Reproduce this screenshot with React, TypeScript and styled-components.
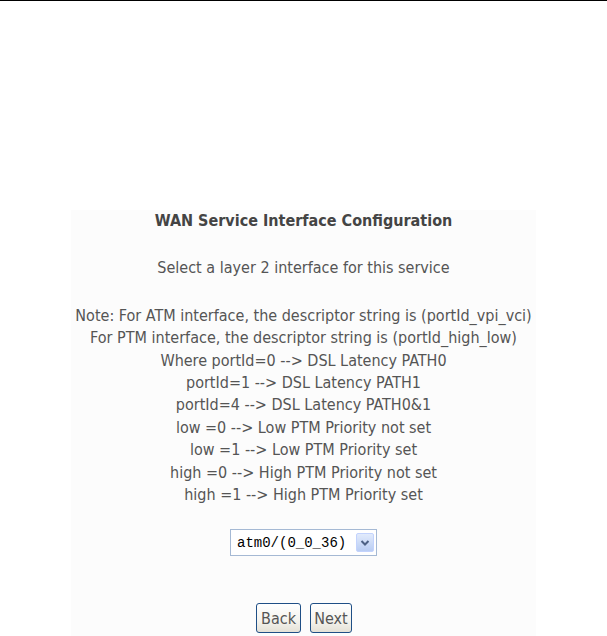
import * as React from 'react';
import styled, { createGlobalStyle } from 'styled-components';

const GlobalStyle = createGlobalStyle`
  html, body {
    margin: 0;
    padding: 0;
    background: #ffffff;
  }
  body {
    font-family: "DejaVu Sans", sans-serif;
  }
`;

const notes = [
  'Note: For ATM interface, the descriptor string is (portId_vpi_vci)',
  'For PTM interface, the descriptor string is (portId_high_low)',
  'Where portId=0 --> DSL Latency PATH0',
  'portId=1 --> DSL Latency PATH1',
  'portId=4 --> DSL Latency PATH0&1',
  'low =0 --> Low PTM Priority not set',
  'low =1 --> Low PTM Priority set',
  'high =0 --> High PTM Priority not set',
  'high =1 --> High PTM Priority set',
];

const Page = styled.div`
  border-top: 1px solid #000000;
  padding-top: 209px;
  min-height: 426px;
`;

const Panel = styled.form`
  width: 465px;
  margin: 0 auto;
  min-height: 426px;
  background: #fcfcfc;
  color: #555555;
  font-family: "DejaVu Sans Condensed", "DejaVu Sans", sans-serif;
  font-size: 16px;
  line-height: 22.4px;
  text-align: center;
`;

const Title = styled.div`
  font-weight: bold;
  color: #444444;
  margin-bottom: 25px;
`;

const Lead = styled.div`
  margin-bottom: 25px;
`;

const NoteLine = styled.div`
  white-space: nowrap;
`;

const SelectRow = styled.div`
  display: flex;
  justify-content: center;
  margin-top: 23px;
`;

const FakeSelect = styled.div`
  display: flex;
  align-items: center;
  width: 147px;
  height: 27px;
  box-sizing: border-box;
  border: 1px solid #a5b9d4;
  background: #ffffff;
  padding: 0 2px 0 6px;
`;

const SelectValue = styled.span`
  flex: 1;
  text-align: left;
  font-family: "Liberation Mono", monospace;
  font-size: 14px;
  color: #000000;
`;

const DropButton = styled.span`
  display: flex;
  align-items: center;
  justify-content: center;
  width: 18px;
  height: 19px;
  border-radius: 2px;
  background: linear-gradient(#e2ebfc, #b9cdf3);
  border: 1px solid #c3d3fd;
  box-sizing: border-box;
`;

const ButtonRow = styled.div`
  display: flex;
  justify-content: center;
  gap: 9px;
  margin-top: 47px;
  padding-left: 1px;
`;

const XpButton = styled.button<{ $w: number }>`
  width: ${p => p.$w}px;
  height: 30px;
  padding: 0;
  border: 1px solid #1f4f86;
  border-radius: 3px;
  background: linear-gradient(#ffffff 0%, #f4f3ee 60%, #e4e1d6 100%);
  color: #555555;
  font-family: "DejaVu Sans Condensed", "DejaVu Sans", sans-serif;
  font-size: 16px;
  cursor: pointer;
`;

export default function App() {
  return (
    <>
      <GlobalStyle />
      <Page>
        <Panel onSubmit={e => e.preventDefault()}>
          <Title>WAN Service Interface Configuration</Title>
          <Lead>Select a layer 2 interface for this service</Lead>
          {notes.map(n => (
            <NoteLine key={n}>{n}</NoteLine>
          ))}
          <SelectRow>
            <FakeSelect role="combobox">
              <SelectValue>atm0/(0_0_36)</SelectValue>
              <DropButton>
                <svg width="10" height="8" viewBox="0 0 10 8">
                  <path d="M1.5 2 L5 5.5 L8.5 2" fill="none" stroke="#4d6185" strokeWidth="2" />
                </svg>
              </DropButton>
            </FakeSelect>
          </SelectRow>
          <ButtonRow>
            <XpButton type="button" $w={45}>Back</XpButton>
            <XpButton type="button" $w={42}>Next</XpButton>
          </ButtonRow>
        </Panel>
      </Page>
    </>
  );
}
